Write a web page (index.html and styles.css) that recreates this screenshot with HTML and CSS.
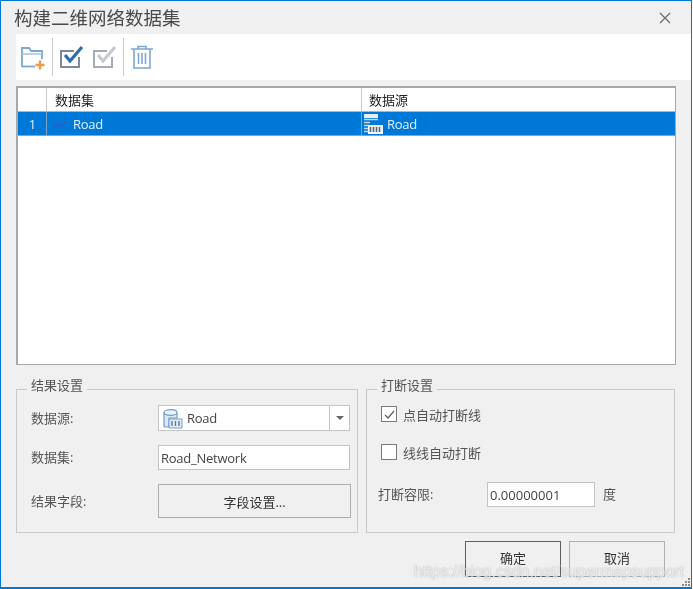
FILE: index.html
```html
<!DOCTYPE html>
<html lang="zh-CN">
<head>
<meta charset="utf-8">
<title>构建二维网络数据集</title>
<link rel="stylesheet" href="styles.css">
</head>
<body>
<div class="window">
  <header class="titlebar">
    <h1 class="title">构建二维网络数据集</h1>
    <svg class="close" width="12" height="12" viewBox="0 0 12 12"><path d="M1 1l10 10M11 1L1 11" stroke="#6a6a6a" stroke-width="1.2" fill="none"/></svg>
  </header>
  <div class="toolbar">
    <svg class="tool" width="26" height="26" viewBox="0 0 26 26" fill="none">
      <path d="M3 23V4h7l2 3h11v8" stroke="#7ba7d2" stroke-width="1.8"/>
      <path d="M3 10h20" stroke="#a9c6e2" stroke-width="1.6"/>
      <path d="M3 22.500h13" stroke="#7ba7d2" stroke-width="1.8"/>
      <path d="M21 16.500v9M16.500 21h9" stroke="#ee9a45" stroke-width="2.4"/>
    </svg>
    <span class="sep sep-a"></span>
    <svg class="tool" width="26" height="26" viewBox="0 0 26 26" fill="none">
      <path d="M21 13v10H3V7h13" stroke="#7d8a99" stroke-width="2"/>
      <path d="M7 11l5 6L24 3" stroke="#2f6ea8" stroke-width="3.2"/>
    </svg>
    <svg class="tool tool-b" width="26" height="26" viewBox="0 0 26 26" fill="none">
      <path d="M21 13v10H3V7h13" stroke="#a4abb3" stroke-width="2"/>
      <path d="M7 11l5 6L24 3" stroke="#c3cad2" stroke-width="3.2"/>
    </svg>
    <span class="sep sep-b"></span>
    <svg class="tool" width="26" height="26" viewBox="0 0 26 26" fill="none" stroke="#7ba7d2" stroke-width="1.6">
      <path d="M2 5h22M9 5V2.500h8V5M5 5v19h16V5"/>
      <path d="M9.500 9v11M13 9v11M16.500 9v11"/>
    </svg>
  </div>
  <div class="grid">
    <div class="grid-row grid-head">
      <div class="cell cell-num"></div>
      <div class="cell cell-set">数据集</div>
      <div class="cell cell-src">数据源</div>
    </div>
    <div class="grid-row grid-sel">
      <div class="cell cell-num">1</div>
      <div class="cell cell-set">
        <svg class="line-icon" width="14" height="10" viewBox="0 0 14 10" fill="none"><path d="M1 8l4-3 3 2 5-5" stroke="#3a55b8" stroke-width="1.200"/></svg>
        <span class="latin">Road</span>
      </div>
      <div class="cell cell-src">
        <svg class="udb" width="21" height="21" viewBox="0 0 21 21" fill="none">
          <path d="M1 1h14v4H1z" fill="#e8eef4"/>
          <path d="M1 6.500h14M1 9.500h6M1 12.500h5M1 15.500h5M1 18.500h5" stroke="#c6d5e3" stroke-width="1.500"/>
          <path d="M5 12h15v9H5z" fill="#f2f5f8"/>
          <path d="M7.500 14v5M10.500 14v5M13.500 14v5M16.500 14v5" stroke="#50657c" stroke-width="1.600"/>
        </svg>
        <span class="latin">Road</span>
      </div>
    </div>
  </div>
  <div class="panels">
    <fieldset class="group group-result">
      <legend class="legend">结果设置</legend>
      <div class="form">
        <label class="lbl">数据源:</label>
        <div class="combo">
          <svg class="udb-blue" width="21" height="21" viewBox="0 0 21 21" fill="none">
            <path d="M2 5v12a2 2 0 0 0 2 2h3V10h8V5" fill="#dbe8f4" stroke="#6f9cc8" stroke-width="1.200"/>
            <ellipse cx="8.500" cy="4.500" rx="6.500" ry="2.800" fill="#eef4fa" stroke="#6f9cc8" stroke-width="1.200"/>
            <path d="M7 11h13v9H7z" fill="#e5eef7" stroke="#6f9cc8"/>
            <path d="M10 13v5M13.500 13v5M17 13v5" stroke="#55799f" stroke-width="1.400"/>
          </svg>
          <span class="combo-text latin">Road</span>
          <span class="combo-btn"><span class="caret"></span></span>
        </div>
        <label class="lbl">数据集:</label>
        <div class="input input-name latin">Road_Network</div>
        <label class="lbl">结果字段:</label>
        <button class="btn btn-field" type="button">字段设置...</button>
      </div>
    </fieldset>
    <fieldset class="group group-break">
      <legend class="legend">打断设置</legend>
      <div class="check check-first">
        <span class="box"><svg width="13" height="13" viewBox="0 0 13 13" fill="none"><path d="M2 7l3 3 6-7" stroke="#606060" stroke-width="1.300"/></svg></span>
        <span>点自动打断线</span>
      </div>
      <div class="check check-second">
        <span class="box"></span>
        <span>线线自动打断</span>
      </div>
      <div class="tol">
        <label class="lbl tol-label">打断容限:</label>
        <div class="input input-tol">0.00000001</div>
        <span class="unit">度</span>
      </div>
    </fieldset>
  </div>
  <div class="actions">
    <button class="btn btn-action btn-default" type="button">确定</button>
    <button class="btn btn-action" type="button">取消</button>
  </div>
  <div class="watermark">https://blog.csdn.net/supermapsupport</div>
  <svg class="grip" width="10" height="10" viewBox="0 0 10 10" fill="#8a8a8a"><path d="M7 1h2v2H7zM4 4h2v2H4zM7 4h2v2H7zM1 7h2v2H1zM4 7h2v2H4zM7 7h2v2H7z"/></svg>
</div>
</body>
</html>
```
FILE: styles.css
```css
* { box-sizing: border-box; }
html, body { margin: 0; padding: 0; background: #fff; }
body {
  font-family: "Open Sans", "Noto Sans CJK SC", sans-serif;
  font-size: 13px;
  color: #333;
}
.window {
  position: relative;
  width: 692px;
  height: 589px;
  background: #f0f0f0;
  border: 1px solid #0078d7;
  border-bottom-width: 2px;
  overflow: hidden;
  filter: blur(0.35px);
}
.titlebar {
  height: 33px;
  display: flex;
  align-items: center;
  justify-content: space-between;
  padding: 0 20px 0 13px;
}
.title {
  margin: 0;
  font-size: 18.500px;
  font-weight: 400;
  color: #4a4a4a;
  font-family: "Noto Sans CJK SC", sans-serif;
  line-height: 33px;
}
.toolbar {
  height: 46px;
  margin-left: 15px;
  background: #fff;
  display: flex;
  align-items: center;
  padding-left: 3px;
}
.tool-b { margin-left: 7px; }
.sep { width: 1px; height: 38px; background: #c8c8c8; }
.sep-a { margin: 0 5px 0 7px; }
.sep-b { margin: 0 5px 0 6px; }
.latin { letter-spacing: -0.25px; }
.grid {
  margin: 6px 15px 0 15px;
  height: 279px;
  background: #fff;
  border: 2px solid #a8a8a8;
  border-right-width: 1px;
  border-bottom: 1px solid #a8a8a8;
}
.grid-row { display: flex; }
.grid-head { height: 24px; border-bottom: 1px solid #b5b5b5; color: #222; }
.grid-sel { height: 24px; background: #0078d7; color: #e4f0fa; border-bottom: 1px solid #8fa3b5; }
.cell { display: flex; align-items: center; height: 100%; }
.cell-num { width: 29px; justify-content: center; padding-left: 1px; border-right: 1px solid #c8c8c8; }
.cell-set { width: 315px; padding-left: 8px; border-right: 1px solid #c8c8c8; }
.cell-src { flex: 1; padding-left: 7px; }
.grid-sel .cell-num, .grid-sel .cell-set { border-right-color: #7fa6c8; }
.grid-sel .cell-src { padding-left: 1px; }
.line-icon { margin: 0 6px 0 -2px; flex: none; }
.udb { margin-right: 3px; flex: none; }
.panels {
  display: flex;
  gap: 8px;
  margin: 11px 0 0 15px;
}
.group {
  margin: 0;
  padding: 0;
  height: 157px;
  border: 1px solid #c9c9c9;
  min-width: 0;
}
.group-result { width: 342px; }
.group-break { width: 309px; }
.legend { margin-left: 10px; padding: 0 4px 8px; color: #555; line-height: 18px; }
.form {
  display: grid;
  grid-template-columns: 127px 192px;
  grid-template-rows: 26px 25px 34px;
  row-gap: 14px;
  align-items: center;
  padding: 3px 0 0 14px;
}
.form > .btn-field { width: 193px; }
.lbl { color: #555; padding-bottom: 2px; }
.combo {
  display: flex;
  align-items: center;
  height: 26px;
  background: #fff;
  border: 1px solid #c4c4c4;
  padding-left: 3px;
}
.udb-blue { flex: none; margin-right: 4px; }
.combo-text { flex: 1; color: #444; }
.combo-btn {
  width: 20px;
  height: 100%;
  border-left: 1px solid #c4c4c4;
  display: flex;
  align-items: center;
  justify-content: center;
}
.caret { width: 0; height: 0; border: 4px solid transparent; border-top: 4px solid #666; border-bottom: 0; }
.input {
  background: #fff;
  border: 1px solid #c4c4c4;
  display: flex;
  align-items: center;
  color: #444;
}
.input-name { height: 25px; padding-left: 2px; }
.btn {
  font: inherit;
  color: #333;
  background: #f0f0f0;
  border: 1px solid #adadad;
  padding: 0;
}
.btn-field { height: 34px; }
.check { display: flex; align-items: center; gap: 6px; padding-left: 14px; color: #555; height: 18px; }
.check-first { margin-top: 3px; }
.check-second { margin-top: 20px; }
.box {
  width: 16px;
  height: 16px;
  flex: none;
  background: #fff;
  border: 1px solid #7a7a7a;
  display: flex;
  align-items: center;
  justify-content: center;
}
.tol { display: flex; align-items: center; margin-top: 21px; padding-left: 11px; }
.tol-label { width: 109px; }
.input-tol { width: 108px; height: 25px; padding-left: 2px; }
.unit { margin-left: 8px; color: #555; padding-bottom: 2px; }
.actions {
  display: flex;
  justify-content: flex-end;
  gap: 8px;
  margin: 8px 26px 0 0;
}
.btn-action { width: 96px; height: 36px; border-color: #b0b0b0; padding-bottom: 3px; }
.btn-default { border: 1px solid #5f5f5f; }
.watermark {
  position: absolute;
  right: 7px;
  bottom: 6px;
  font-family: "Liberation Sans", sans-serif;
  font-size: 15.900px;
  color: rgba(255, 255, 255, 0.7);
  text-shadow: 0 0 1.500px rgba(110, 110, 110, 0.6);
}
.grip { position: absolute; right: 0; bottom: 0; }
```
